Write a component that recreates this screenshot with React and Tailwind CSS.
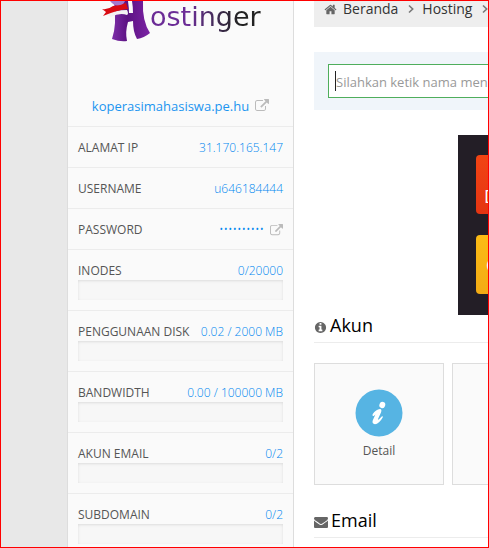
const ICONS = {
  external:
    "M1408 928v320q0 119-84.5 203.5t-203.5 84.5h-832q-119 0-203.5-84.5t-84.5-203.5v-832q0-119 84.5-203.5t203.5-84.5h704q14 0 23 9t9 23v64q0 14-9 23t-23 9h-704q-66 0-113 47t-47 113v832q0 66 47 113t113 47h832q66 0 113-47t47-113v-320q0-14 9-23t23-9h64q14 0 23 9t9 23zm384-864v512q0 26-19 45t-45 19-45-19l-176-176-652 652q-10 10-23 10t-23-10l-114-114q-10-10-10-23t10-23l652-652-176-176q-19-19-19-45t19-45 45-19h512q26 0 45 19t19 45z",
  home:
    "M1472 992v480q0 26-19 45t-45 19h-384v-384h-256v384h-384q-26 0-45-19t-19-45v-480q0-1 .5-3t.5-3l575-474 575 474q1 2 1 6zm223-69l-62 74q-8 9-21 11h-3q-13 0-21-7l-692-577-692 577q-12 8-24 7-13-2-21-11l-62-74q-8-10-7-23.5t11-21.5l719-599q32-26 76-26t76 26l244 204v-195q0-14 9-23t23-9h192q14 0 23 9t9 23v408l219 182q10 8 11 21.5t-7 23.5z",
  info:
    "M1152 1376v-160q0-14-9-23t-23-9h-96v-512q0-14-9-23t-23-9h-320q-14 0-23 9t-9 23v160q0 14 9 23t23 9h96v320h-96q-14 0-23 9t-9 23v160q0 14 9 23t23 9h448q14 0 23-9t9-23zm-128-896v-160q0-14-9-23t-23-9h-192q-14 0-23 9t-9 23v160q0 14 9 23t23 9h192q14 0 23-9t9-23zm640 416q0 209-103 385.5t-279.5 279.5-385.5 103-385.5-103-279.5-279.5-103-385.5 103-385.5 279.5-279.5 385.5-103 385.5 103 279.5 279.5 103 385.5z",
  envelope:
    "M1792 710v794q0 66-47 113t-113 47h-1472q-66 0-113-47t-47-113v-794q44 49 101 87 362 246 497 345 57 42 92.5 65.5t94.5 48 110 24.5h2q51 0 110-24.5t94.5-48 92.5-65.5q170-123 498-345 57-39 100-87zm0-294q0 79-49 151t-122 123q-376 261-468 325-10 7-42.5 31t-54 38.5-52 32.5-57.5 27-50 9h-2q-23 0-50-9t-57.5-27-52-32.5-54-38.5-42.5-31q-91-64-262-182.5t-205-142.5q-62-42-117-115.5t-55-136.5q0-78 41.5-130t118.5-52h1472q65 0 112.5 47t47.5 113z",
};

function Icon({ name, className }) {
  return (
    <svg viewBox="0 0 1792 1792" fill="currentColor" aria-hidden="true" className={`shrink-0 ${className}`}>
      <path d={ICONS[name]} />
    </svg>
  );
}

function Chevron() {
  return (
    <svg viewBox="0 0 6 10" aria-hidden="true" className="h-[10px] w-[6px] shrink-0 text-[#777]">
      <path d="M1 1.5 L4.7 5 L1 8.5" fill="none" stroke="currentColor" strokeWidth="1.6" />
    </svg>
  );
}

function Logo() {
  return (
    <div className="flex h-[95px] items-start pl-8">
      <svg viewBox="0 0 50 42" aria-hidden="true" className="h-[42px] w-[50px] shrink-0">
        <defs>
          <linearGradient id="h" x1="0" y1="0" x2="1" y2="0">
            <stop offset="0" stopColor="#7d2fa8" />
            <stop offset="0.4" stopColor="#5c1283" />
            <stop offset="1" stopColor="#7b23a4" />
          </linearGradient>
        </defs>
        <path
          d="M14 0 H28 Q29 7 29 12 H33 Q33 6 32 0 H43 Q42 20 50 32 Q44 37 37 38 Q33 31 33 20 L28 21 Q25 31 27 40 Q20 41 12 38 Q17 24 14 0Z"
          fill="url(#h)"
        />
        <path d="M10 0 H25 Q23 5 18 5 Q13 4 10 0Z" fill="#a679cc" />
        <path d="M7 14 Q14 9 27 9 Q29 13 27 14 Q20 11 11 16Z" fill="#f4f1f4" />
        <path d="M2 8 Q8 9 13 5 Q20 5 26 2 L28 8 Q17 9 3 15 L6 11Z" fill="#d90b12" />
      </svg>
      <span className="bg-linear-to-r from-[#6b2c96] from-35% to-[#222] to-80% bg-clip-text font-['DejaVu_Sans'] text-[27px] leading-8 text-transparent">
        ostinger
      </span>
    </div>
  );
}

function Row({ label, children, bar }) {
  return (
    <div className="border-b border-[#ececec] px-[10px] pt-3 pb-[10px]">
      <div className="flex items-center justify-between text-xs leading-[18px]">
        <dt className="whitespace-nowrap text-[#555]">{label}</dt>
        <dd className="flex items-center whitespace-nowrap font-light text-[#0087f0]">{children}</dd>
      </div>
      {bar && (
        <div
          role="progressbar"
          aria-label={label}
          aria-valuenow={0}
          className="h-5 bg-[#f7f7f7] shadow-[inset_0_1px_3px_#0000001c]"
        />
      )}
    </div>
  );
}

function Heading({ icon, children }) {
  return (
    <h2 className="flex h-7 items-start border-b border-[#ececec] text-lg leading-5 text-black">
      <span className="flex h-6 items-center text-[#666]">{icon}</span>
      {children}
    </h2>
  );
}

export default function App() {
  return (
    <div className="flex h-screen overflow-hidden border border-[#f00] bg-white font-['Open_Sans',sans-serif]">
      <div className="w-[67px] shrink-0 border-r border-[#ddd] bg-[#e8e8e8]" />
      <aside className="w-[226px] shrink-0 border-r border-[#ddd] bg-[#fafafa]">
        <Logo />
        <div className="flex justify-center border-b border-[#ececec] pb-[10px] text-[13px] leading-5">
          <a href="#site" className="flex items-center gap-[6px] text-[#1a95f0]">
            koperasimahasiswa.pe.hu
            <Icon name="external" className="size-[14px] text-[#bbb]" />
          </a>
        </div>
        <dl>
          <Row label="ALAMAT IP">31.170.165.147</Row>
          <Row label="USERNAME">u646184444</Row>
          <Row label="PASSWORD">
            <span className="mr-[6px]">••••••••••</span>
            <button type="button" aria-label="Change password">
              <Icon name="external" className="size-[13px] text-[#bbb]" />
            </button>
          </Row>
          <Row label="INODES" bar>0/20000</Row>
          <Row label="PENGGUNAAN DISK" bar>0.02 / 2000 MB</Row>
          <Row label="BANDWIDTH" bar>0.00 / 100000 MB</Row>
          <Row label="AKUN EMAIL" bar>0/2</Row>
          <Row label="SUBDOMAIN" bar>0/2</Row>
        </dl>
      </aside>
      <main className="ml-5 min-w-0 flex-1">
        <nav className="flex h-[26px] items-start bg-[#eee] pl-[10px] text-sm leading-4 text-[#333]">
          <a href="#home" className="flex items-center gap-[6px]">
            <Icon name="home" className="size-[13px] text-[#666]" />
            Beranda
          </a>
          <span className="mr-2 ml-[10px] flex h-4 items-center"><Chevron /></span>
          <a href="#hosting">Hosting</a>
          <span className="ml-[10px] flex h-4 items-center"><Chevron /></span>
        </nav>
        <div className="mt-[25px] bg-[#f0f5fa] py-3 pl-[14px]">
          <div className="flex h-[34px] items-center border border-r-0 border-[#4fae5c] bg-white pl-[6px]">
            <span className="h-5 w-px shrink-0 bg-[#222]" />
            <input
              type="text"
              aria-label="Search"
              placeholder="Silahkan ketik nama men"
              className="h-8 min-w-0 flex-1 pt-px text-[13px] outline-none placeholder:text-[#999]"
            />
          </div>
        </div>
        <div className="mt-[25px] ml-36 flex h-[180px] flex-col gap-[21px] overflow-hidden bg-[#231e26] pt-5 pl-[18px]">
          <div className="flex h-[59px] w-24 shrink-0 items-end rounded bg-linear-to-b from-[#f24413] to-[#e43512] pb-2 pl-2 text-lg leading-5 text-white">D</div>
          <div className="flex h-[59px] w-24 shrink-0 items-center rounded bg-linear-to-b from-[#fcbb14] to-[#f3ab14] pl-[10px] text-lg leading-5 text-white">C</div>
        </div>
        <Heading icon={<Icon name="info" className="mr-[3px] size-[13px]" />}>Akun</Heading>
        <div className="mt-5 flex gap-2">
          <a
            href="#detail"
            className="flex h-[122px] w-[130px] shrink-0 flex-col items-center gap-1 border border-[#ddd] bg-[#fafafa] pt-[25px] text-xs leading-5 text-[#555]"
          >
            <svg viewBox="0 0 48 48" aria-hidden="true" className="size-12">
              <circle cx="24" cy="24" r="23.5" fill="#56b4e3" />
              <ellipse cx="27.3" cy="16" rx="2.9" ry="3.2" transform="rotate(20 27.3 16)" fill="#fff" />
              <path
                d="M17.6 25.2 Q21 20.5 25 20.1 Q27.2 20.5 26 23.5 L23 30 Q22.7 31.2 24 30.3 L27 27.3 Q28.2 27 27.7 28.5 Q24 35 20 35.2 Q16.6 34.6 17.8 31.3 L20.4 25.6 L18.8 27 Q17 27.3 17.6 25.2Z"
                fill="#fff"
              />
            </svg>
            Detail
          </a>
          <div className="h-[122px] w-[130px] shrink-0 border border-[#ddd] bg-[#fafafa]" />
        </div>
        <div className="mt-[25px]">
          <Heading icon={<Icon name="envelope" className="mr-[3px] size-[14px]" />}>Email</Heading>
        </div>
      </main>
    </div>
  );
}
